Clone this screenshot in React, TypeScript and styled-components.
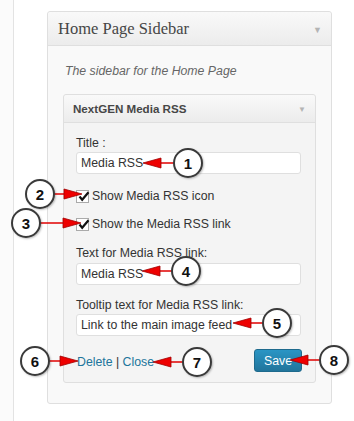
import React from 'react';
import styled, { createGlobalStyle } from 'styled-components';

const GlobalStyle = createGlobalStyle`
  html, body {
    margin: 0;
    padding: 0;
    background: #ffffff;
  }
  body {
    font-family: 'Liberation Sans', Arial, sans-serif;
    font-size: 12.3px;
    color: #333333;
  }
`;

type Callout = { n: number; cx: number; cy: number; tip: number };

// circle centre + arrow tip x (arrow sits on the circle's centre line)
const callouts: Callout[] = [
  { n: 1, cx: 188, cy: 163, tip: 143 },
  { n: 2, cx: 40, cy: 194, tip: 82 },
  { n: 3, cx: 26, cy: 223, tip: 81 },
  { n: 4, cx: 186, cy: 271, tip: 142 },
  { n: 5, cx: 277, cy: 323, tip: 233 },
  { n: 6, cx: 35, cy: 361, tip: 78 },
  { n: 7, cx: 197, cy: 362, tip: 153 },
  { n: 8, cx: 334, cy: 360, tip: 290 },
];

const Arrow: React.FC<{ c: Callout }> = ({ c }) => {
  const dir = c.tip > c.cx ? 1 : -1;
  const edge = c.cx + dir * 14;
  const base = c.tip - dir * 18;
  return (
    <g>
      <line x1={edge} y1={c.cy} x2={base} y2={c.cy} stroke="#e00000" strokeWidth="1.5" />
      <polygon
        points={`${c.tip},${c.cy} ${base},${c.cy - 5} ${base},${c.cy + 5}`}
        fill="#ee0000"
        stroke="#a00000"
        strokeWidth="0.8"
      />
    </g>
  );
};

const Check: React.FC = () => (
  <svg width="13" height="13" viewBox="0 0 13 13" style={{ position: 'absolute', left: 0, top: -1 }}>
    <path d="M2.5 6.5 L5.2 9.8 L11.5 2.2" fill="none" stroke="#111" strokeWidth="2.2" />
  </svg>
);

const App: React.FC = () => {
  return (
    <>
      <GlobalStyle />
      <S.Page>
        <S.Strip />
        <S.Main>
          <S.Panel>
            <S.PanelHeader>
              <S.PanelTitle>Home Page Sidebar</S.PanelTitle>
              <S.Toggle>▼</S.Toggle>
            </S.PanelHeader>
            <S.PanelBody>
              <S.Description>The sidebar for the Home Page</S.Description>
              <S.Widget>
                <S.WidgetHeader>
                  <S.WidgetTitle>NextGEN Media RSS</S.WidgetTitle>
                  <S.Toggle $small>▼</S.Toggle>
                </S.WidgetHeader>
                <S.WidgetBody>
                  <S.Field $top={0}>
                    <S.Label>Title :</S.Label>
                    <S.Input readOnly value="Media RSS" $gap={1} />
                  </S.Field>
                  <S.CheckRow $top={14}>
                    <S.Box>
                      <Check />
                    </S.Box>
                    Show Media RSS icon
                  </S.CheckRow>
                  <S.CheckRow $top={12}>
                    <S.Box>
                      <Check />
                    </S.Box>
                    Show the Media RSS link
                  </S.CheckRow>
                  <S.Field $top={13}>
                    <S.Label>Text for Media RSS link:</S.Label>
                    <S.Input readOnly value="Media RSS" $gap={2} />
                  </S.Field>
                  <S.Field $top={12}>
                    <S.Label>Tooltip text for Media RSS link:</S.Label>
                    <S.Input readOnly value="Link to the main image feed" $gap={1} />
                  </S.Field>
                  <S.Controls>
                    <S.Links>
                      <S.Link>Delete</S.Link> | <S.Link>Close</S.Link>
                    </S.Links>
                    <S.SaveButton type="button">Save</S.SaveButton>
                  </S.Controls>
                </S.WidgetBody>
              </S.Widget>
            </S.PanelBody>
          </S.Panel>
        </S.Main>
      </S.Page>

      <S.Overlay width="354" height="421">
        {callouts.map((c) => (
          <Arrow key={c.n} c={c} />
        ))}
      </S.Overlay>
      {callouts.map((c) => (
        <S.Badge key={c.n} style={{ left: c.cx - 15, top: c.cy - 15 }}>
          {c.n}
        </S.Badge>
      ))}
    </>
  );
};

export default App;

const S = {
  Page: styled.div`
    display: flex;
    width: 354px;
    height: 421px;
    overflow: hidden;
  `,

  Strip: styled.div`
    width: 13px;
    flex-shrink: 0;
    background: #fbfbfb;
    border-right: 1px solid #e3e3e3;
  `,

  Main: styled.div`
    padding: 11px 0 0 33px;
  `,

  Panel: styled.div`
    width: 285px;
    box-sizing: border-box;
    background: #f9f9f9;
    border: 1px solid #dfdfdf;
    border-radius: 3px;
  `,

  PanelHeader: styled.div`
    display: flex;
    align-items: center;
    justify-content: space-between;
    height: 33px;
    padding: 0 9px 0 10px;
    background: linear-gradient(to bottom, #f9f9f9, #ececec);
    border-bottom: 1px solid #dfdfdf;
    border-radius: 3px 3px 0 0;
  `,

  PanelTitle: styled.h3`
    margin: 0;
    font-family: 'Liberation Serif', 'Times New Roman', serif;
    font-size: 16.5px;
    font-weight: normal;
    color: #464646;
  `,

  Toggle: styled.span<{ $small?: boolean }>`
    font-size: ${(p) => (p.$small ? '8px' : '9px')};
    color: #b4b4b4;
    margin-top: 2px;
  `,

  PanelBody: styled.div`
    padding: 17px 15px 20px;
  `,

  Description: styled.p`
    margin: 0 0 15px 2px;
    font-style: italic;
    line-height: 16px;
    color: #666666;
  `,

  Widget: styled.div`
    background: #f4f4f4;
    border: 1px solid #dfdfdf;
    border-radius: 3px;
  `,

  WidgetHeader: styled.div`
    display: flex;
    align-items: center;
    justify-content: space-between;
    height: 27px;
    padding: 0 9px 0 9px;
    background: linear-gradient(to bottom, #f9f9f9, #ececec);
    border-bottom: 1px solid #dfdfdf;
    border-radius: 3px 3px 0 0;
  `,

  WidgetTitle: styled.h4`
    margin: 0;
    font-size: 11.6px;
    font-weight: bold;
    color: #464646;
  `,

  WidgetBody: styled.div`
    padding: 12px 13px 10px 12px;
  `,

  Field: styled.div<{ $top: number }>`
    display: flex;
    flex-direction: column;
    margin-top: ${(p) => p.$top}px;
  `,

  Label: styled.label`
    line-height: 16px;
    color: #333333;
  `,

  Input: styled.input<{ $gap: number }>`
    box-sizing: border-box;
    width: 225px;
    height: 22px;
    margin: ${(p) => p.$gap}px 0 0;
    padding: 0 4px;
    font-family: 'Liberation Sans', Arial, sans-serif;
    font-size: 12.3px;
    color: #333333;
    background: #ffffff;
    border: 1px solid #dfdfdf;
    border-radius: 3px;
    outline: none;
  `,

  CheckRow: styled.label<{ $top: number }>`
    display: flex;
    align-items: center;
    gap: 3px;
    height: 16px;
    margin-top: ${(p) => p.$top}px;
    color: #333333;
  `,

  Box: styled.span`
    position: relative;
    box-sizing: border-box;
    width: 13px;
    height: 13px;
    background: #ffffff;
    border: 1px solid #aaaaaa;
  `,

  Controls: styled.div`
    display: flex;
    align-items: center;
    justify-content: space-between;
    height: 23px;
    margin-top: 13px;
  `,

  Links: styled.span`
    margin-left: 1px;
    margin-top: 2px;
    color: #333333;
  `,

  Link: styled.a`
    color: #21759b;
    text-decoration: none;
  `,

  SaveButton: styled.button`
    width: 48px;
    height: 23px;
    padding: 0;
    font-family: 'Liberation Sans', Arial, sans-serif;
    font-size: 12.3px;
    color: #ffffff;
    background: linear-gradient(to bottom, #2a95c5, #21759b);
    border: 1px solid #1e6a8d;
    border-radius: 3px;
    cursor: pointer;
  `,

  Overlay: styled.svg`
    position: absolute;
    left: 0;
    top: 0;
    pointer-events: none;
  `,

  Badge: styled.div`
    position: absolute;
    box-sizing: border-box;
    width: 30px;
    height: 30px;
    display: flex;
    align-items: center;
    justify-content: center;
    font-family: 'Liberation Sans', Arial, sans-serif;
    font-size: 15px;
    font-weight: bold;
    color: #111111;
    background: #ffffff;
    border: 2px solid #3a3a3a;
    border-radius: 50%;
    box-shadow: 1px 1px 2px rgba(0, 0, 0, 0.25);
  `,
};
